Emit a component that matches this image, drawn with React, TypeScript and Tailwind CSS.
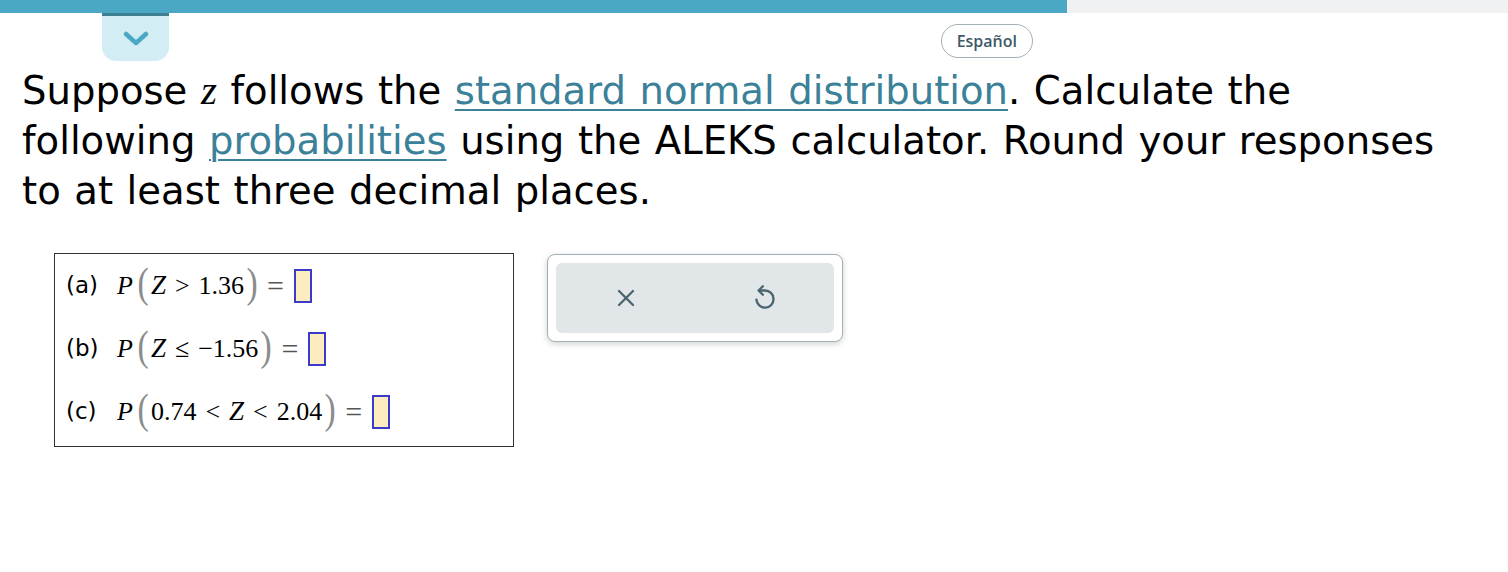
import { X } from 'lucide-react';

function AnswerBox() {
  return <span className="inline-block w-[18px] h-[34px] bg-[#fcecbf] border-2 border-[#3b3bc9]" />;
}

function Paren({ side }: { side: 'l' | 'r' }) {
  return (
    <span
      className={`inline-block text-[42px] leading-none text-[#8c8c8c] relative -top-[3px] font-['Liberation_Serif',serif] scale-x-[0.8] ${
        side === 'l' ? 'ml-[3px] mr-[1px]' : 'ml-[1px]'
      }`}
    >
      {side === 'l' ? '(' : ')'}
    </span>
  );
}

function Op({ children }: { children: React.ReactNode }) {
  return <span className="mx-[9px]">{children}</span>;
}

function Row({ label, children }: { label: string; children: React.ReactNode }) {
  return (
    <div className="flex items-center h-[63px]">
      <span className="w-[51px] text-[23px] font-['DejaVu_Sans',sans-serif] text-black">{label}</span>
      <span className="flex items-center font-['Liberation_Serif',serif] text-[26px] text-black whitespace-pre">
        {children}
      </span>
    </div>
  );
}

function Eq() {
  return (
    <>
      <span className="ml-[8px] mr-[10px] text-[#555] text-[30px] leading-none">=</span>
      <AnswerBox />
    </>
  );
}

export default function App() {
  return (
    <div className="w-[1508px] h-[572px] bg-white overflow-hidden">
      {/* progress bar */}
      <div className="flex h-[13px]">
        <div className="w-[1067px] bg-[#4ba8c4]" />
        <div className="flex-1 bg-[#f0f1f3]" />
      </div>

      <div className="flex items-start w-[1067px]">
        <button className="ml-[102px] w-[67px] h-[48px] bg-[#d3edf4] border-t-[3px] border-[#3f7f93] rounded-b-[14px] flex items-center justify-center">
          <svg width="28" height="18" viewBox="0 0 28 18" fill="none">
            <path d="M4 4 L14 13 L24 4" stroke="#4aa8c4" strokeWidth="4.5" strokeLinecap="round" strokeLinejoin="round" />
          </svg>
        </button>
        <button className="ml-auto mr-[34px] mt-[11px] h-[34px] px-[15px] rounded-full border-[1.5px] border-[#a3b0b6] text-[#3e5967] text-[16px] font-semibold font-['Open_Sans',sans-serif]">
          Español
        </button>
      </div>

      <p className="mt-[4px] pl-[22px] text-[38.6px] leading-[50px] [word-spacing:1.3px] text-black font-['DejaVu_Sans',sans-serif] whitespace-nowrap">
        Suppose <span className="font-['Liberation_Serif',serif] italic text-[41px]">z</span> follows the{' '}
        <span className="text-[#3b8199] underline decoration-[2px] underline-offset-[5px]">standard normal distribution</span>. Calculate the
        <br />
        following <span className="text-[#3b8199] underline decoration-[2px] underline-offset-[5px]">probabilities</span> using the ALEKS calculator. Round your responses
        <br />
        to at least three decimal places.
      </p>

      <div className="flex items-start mt-[37px] ml-[54px] gap-[33px]">
        <div className="w-[460px] h-[194px] border-[1.5px] border-[#333] pl-[11px]">
          <Row label="(a)">
            <span className="italic">P</span>
            <Paren side="l" />
            <span className="italic text-[27px]">Z</span>
            <Op>&gt;</Op>
            <span>1.36</span>
            <Paren side="r" />
            <Eq />
          </Row>
          <Row label="(b)">
            <span className="italic">P</span>
            <Paren side="l" />
            <span className="italic text-[27px]">Z</span>
            <Op>≤</Op>
            <span>−1.56</span>
            <Paren side="r" />
            <Eq />
          </Row>
          <Row label="(c)">
            <span className="italic">P</span>
            <Paren side="l" />
            <span>0.74</span>
            <Op>&lt;</Op>
            <span className="italic text-[27px]">Z</span>
            <Op>&lt;</Op>
            <span>2.04</span>
            <Paren side="r" />
            <Eq />
          </Row>
        </div>

        <div className="mt-[1px] w-[296px] h-[88px] rounded-[8px] border-[1.5px] border-[#9fb0b6] bg-white shadow-[0_2px_6px_rgba(0,0,0,0.18)] p-[8px]">
          <div className="h-full rounded-[6px] bg-[#e1e6e9] flex items-center">
            <div className="flex-1 flex justify-center">
              <X className="w-[28px] h-[28px] text-[#4a6470]" strokeWidth={2} />
            </div>
            <div className="flex-1 flex justify-center">
              <svg width="26" height="30" viewBox="0 0 24 28" fill="none" stroke="#4a6470" strokeWidth="2.2" strokeLinecap="round" strokeLinejoin="round">
                <path d="M10 3 L6 7 L10 11" />
                <path d="M6.5 7 H12 A8 8 0 1 1 4 15.5" />
              </svg>
            </div>
          </div>
        </div>
      </div>
    </div>
  );
}
